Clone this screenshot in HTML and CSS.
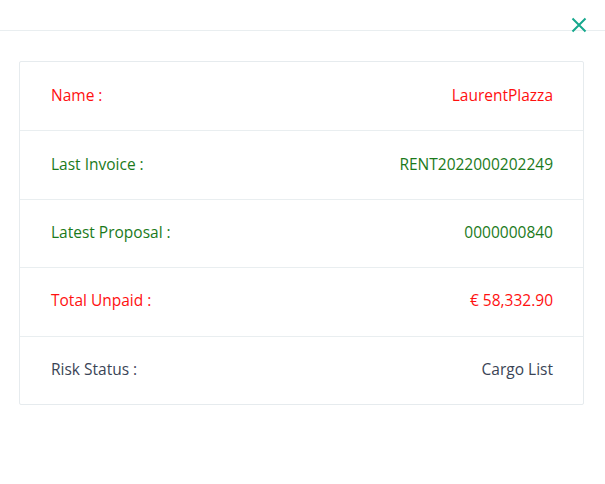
FILE: index.html
```html
<!DOCTYPE html>
<html>
<head>
<meta charset="utf-8">
<link rel="stylesheet" href="styles.css">
</head>
<body>
<div class="modal">
  <div class="modal-header">
    <button class="close" aria-label="Close">
      <svg width="16" height="16" viewBox="0 0 16 16"><path d="M1.5 1.5 L14.5 14.5 M14.5 1.5 L1.5 14.5" stroke="#17a88d" stroke-width="2" fill="none"/></svg>
    </button>
  </div>
  <div class="modal-body">
    <div class="card">
      <div class="row red"><span>Name :</span><span>LaurentPlazza</span></div>
      <div class="row green"><span>Last Invoice :</span><span>RENT2022000202249</span></div>
      <div class="row green"><span>Latest Proposal :</span><span>0000000840</span></div>
      <div class="row red"><span>Total Unpaid :</span><span>€ 58,332.90</span></div>
      <div class="row dark"><span>Risk Status :</span><span>Cargo List</span></div>
    </div>
  </div>
</div>
</body>
</html>
```
FILE: styles.css
```css
html, body {
  margin: 0;
  padding: 0;
  background: #fff;
  font-family: "Open Sans", sans-serif;
}
.modal {
  width: 605px;
  height: 484px;
}
.modal-header {
  height: 31px;
  border-bottom: 1px solid #e9eef0;
  display: flex;
  justify-content: flex-end;
  align-items: flex-start;
  padding: 17px 18px 0 0;
  box-sizing: border-box;
}
.close {
  border: 0;
  background: none;
  padding: 0;
  margin: 0;
  width: 16px;
  height: 16px;
  display: block;
  cursor: pointer;
}
.close svg { display: block; }
.modal-body {
  padding: 30px 21px 0 19px;
}
.card {
  border: 1px solid #e6ebee;
  border-radius: 2px;
}
.row {
  height: 68.4px;
  display: flex;
  justify-content: space-between;
  align-items: center;
  padding: 0 30px 3px 31px;
  box-sizing: border-box;
  font-size: 15.5px;
  border-top: 1px solid #e9eef0;
}
.row:first-child {
  border-top: 0;
}
.red { color: #ff1010; }
.green { color: #1b7a1b; }
.dark { color: #3a4456; }
```
